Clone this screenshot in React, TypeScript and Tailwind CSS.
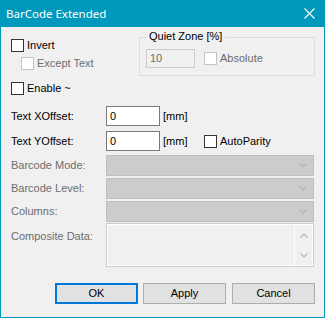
import React from "react";

const teal = "bg-[#0099bc]";

function Check({ label, disabled }: { label: string; disabled?: boolean }) {
  return (
    <div className="flex items-center h-[13px]">
      <span
        className={
          "w-[13px] h-[13px] bg-white border " +
          (disabled ? "border-[#c4c4c4]" : "border-[#333333]")
        }
      />
      <span className={"ml-[3px] leading-none " + (disabled ? "text-[#6d6d6d]" : "text-black")}>
        {label}
      </span>
    </div>
  );
}

function Chevron({ up }: { up?: boolean }) {
  return (
    <svg width="8" height="5" viewBox="0 0 8 5" className="block">
      <polyline
        points={up ? "0.5,4.5 4,1 7.5,4.5" : "0.5,0.5 4,4 7.5,0.5"}
        fill="none"
        stroke="#b4b4b4"
        strokeWidth="1.2"
      />
    </svg>
  );
}

function Combo({ label }: { label: string }) {
  return (
    <div className="flex items-center h-[21px]">
      <span className="w-[95px] text-[#6d6d6d]">{label}</span>
      <div className="w-[208px] h-[21px] bg-[#cccccc] border border-[#bfbfbf] flex items-center justify-end pr-[6px]">
        <Chevron />
      </div>
    </div>
  );
}

export default function App() {
  return (
    <div className="w-[325px] h-[318px] flex flex-col font-['Liberation_Sans',Arial,sans-serif] text-[11px] text-black select-none">
      {/* title bar */}
      <div className={"h-[27px] flex items-center justify-between pl-[6px] pr-[10px] " + teal}>
        <span className="font-['Noto_Sans',sans-serif] text-[11.5px] text-white">BarCode Extended</span>
        <svg width="11" height="11" viewBox="0 0 11 11">
          <path d="M0.5 0.5 L10.5 10.5 M10.5 0.5 L0.5 10.5" stroke="#ffffff" strokeWidth="1.1" />
        </svg>
      </div>

      <div className="flex-1 bg-[#f0f0f0] border-x border-b border-[#0099bc] flex flex-col">
        {/* top section */}
        <div className="flex h-[49px]">
          <div className="w-[138px] pl-[10px] pt-[12px] flex flex-col gap-[5px]">
            <Check label="Invert" />
            <div className="pl-[10px]">
              <Check label="Except Text" disabled />
            </div>
          </div>
          <div className="mt-[10px] w-[176px] h-[39px] border border-[#dcdcdc] relative">
            <span className="absolute left-[6px] -top-[7px] px-[3px] bg-[#f0f0f0] leading-none">
              Quiet Zone [%]
            </span>
            <div className="flex items-center pl-[6px] pt-[11px]">
              <div className="w-[49px] h-[19px] bg-[#f0f0f0] border border-[#cccccc] flex items-center pl-[3px] text-[#6d6d6d]">
                10
              </div>
              <div className="ml-[9px]">
                <Check label="Absolute" disabled />
              </div>
            </div>
          </div>
        </div>

        <div className="pl-[10px] mt-[6px]">
          <Check label="Enable ~" />
        </div>

        {/* offsets */}
        <div className="flex items-center pl-[10px] mt-[11px] h-[20px]">
          <span className="w-[95px]">Text XOffset:</span>
          <div className="w-[54px] h-[20px] bg-white border border-[#7a7a7a] flex items-center pl-[3px]">0</div>
          <span className="ml-[3px]">[mm]</span>
        </div>
        <div className="flex items-center pl-[10px] mt-[5px] h-[20px]">
          <span className="w-[95px]">Text YOffset:</span>
          <div className="w-[54px] h-[20px] bg-white border border-[#7a7a7a] flex items-center pl-[3px]">0</div>
          <span className="ml-[3px] w-[41px]">[mm]</span>
          <Check label="AutoParity" />
        </div>

        {/* disabled combos */}
        <div className="flex flex-col gap-[2px] pl-[10px] mt-[4px]">
          <Combo label="Barcode Mode:" />
          <Combo label="Barcode Level:" />
          <Combo label="Columns:" />
        </div>
        <div className="flex pl-[10px] mt-[1px]">
          <span className="w-[95px] pt-[5px] text-[#6d6d6d]">Composite Data:</span>
          <div className="w-[208px] h-[44px] border border-[#cccccc] flex">
            <div className="flex-1 border border-white border-r-0" />
            <div className="w-[19px] border border-white flex flex-col items-center justify-between pt-[8px] pb-[7px]">
              <Chevron up />
              <Chevron />
            </div>
          </div>
        </div>

        {/* buttons */}
        <div className="flex justify-end pr-[9px] mt-[16px] gap-[5px]">
          <button className="w-[83px] h-[21px] bg-[#e1e1e1] border-2 border-[#0078d7]">OK</button>
          <button className="w-[83px] h-[21px] bg-[#e1e1e1] border border-[#adadad]">Apply</button>
          <button className="w-[83px] h-[21px] bg-[#e1e1e1] border border-[#adadad] ml-[1px]">Cancel</button>
        </div>
      </div>
    </div>
  );
}
